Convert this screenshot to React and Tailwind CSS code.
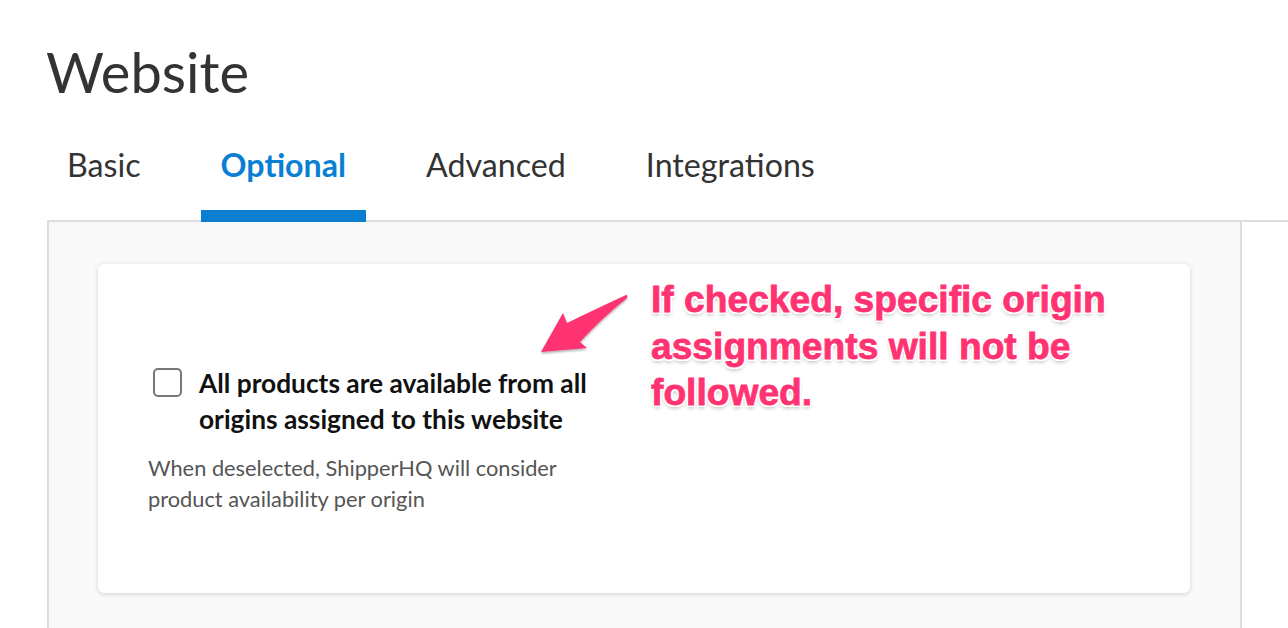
import React from 'react'

const tabs = ['Basic', 'Optional', 'Advanced', 'Integrations']

function Arrow() {
  return (
    <svg width="120" height="90" viewBox="0 0 120 90" className="absolute left-[422px] top-[16px]">
      <defs>
        <filter id="sh" x="-20%" y="-20%" width="140%" height="150%">
          <feDropShadow dx="0" dy="1.5" stdDeviation="1.2" floodColor="#000" floodOpacity="0.35" />
        </filter>
      </defs>
      <path
        d="M21 72 L43 33 L47 43 Q78 28 106 15 Q108 15 107 18 Q82 38 60 62 L67 68 Z"
        fill="#ff3372"
        filter="url(#sh)"
      />
    </svg>
  )
}

export default function App() {
  return (
    <div className="w-full h-[628px] bg-white overflow-hidden text-[#333]" style={{ fontFamily: 'Lato, "Open Sans", sans-serif' }}>
      <h1 className="pl-[46px] pt-[36px] text-[56px] leading-[72px] font-normal text-[#333]">Website</h1>

      <div className="ml-[47px] mt-[37px] flex gap-[40px] border-b-2 border-[#dddddd]">
        {tabs.map(t => (
          <div
            key={t}
            className={
              t === 'Optional'
                ? 'px-[20px] pb-[23px] text-[32.2px] leading-[40px] font-bold text-[#0a7fd2] border-b-[12px] border-[#0a7fd2] mb-[-2px]'
                : 'px-[20px] pb-[35px] text-[32.2px] leading-[40px] text-[#333]'
            }
          >
            {t}
          </div>
        ))}
      </div>

      <div className="flex">
        <div className="ml-[47px] w-[1195px] h-[420px] border-l-2 border-r-2 border-[#dddddd] bg-[#f9f9f9] pl-[49px] pt-[42px]">
          <div className="relative w-[1092px] h-[329px] bg-white rounded-[6px] shadow-[0_1px_5px_rgba(0,0,0,0.16)] pl-[50px] pt-[101px]">
            <label className="flex items-start gap-[17px] pl-[5px]">
              <span className="mt-[3px] w-[29px] h-[29px] shrink-0 rounded-[5px] border-2 border-[#777] bg-white" />
              <span className="text-[26.3px] leading-[36px] font-bold text-[#111] w-[415px]">
                All products are available from all origins assigned to this website
              </span>
            </label>
            <p className="mt-[15px] text-[21.8px] leading-[31px] text-[#555] w-[440px]">
              When deselected, ShipperHQ will consider product availability per origin
            </p>

            <Arrow />

            <div
              className="absolute left-[553px] top-[12px] text-[37.2px] leading-[46.5px] font-bold text-[#ff3372]"
              style={{
                fontFamily: '"Liberation Sans", Arial, sans-serif',
                WebkitTextStroke: '0.8px #ff3372',
                textShadow:
                  '2px 0 0 #fff, -2px 0 0 #fff, 0 2px 0 #fff, 0 -2px 0 #fff, 1.5px 1.5px 0 #fff, -1.5px 1.5px 0 #fff, 1.5px -1.5px 0 #fff, -1.5px -1.5px 0 #fff, 0 3px 4px rgba(0,0,0,0.3)'
              }}
            >
              If checked, specific origin<br />
              assignments will not be<br />
              followed.
            </div>
          </div>
        </div>
      </div>
    </div>
  )
}
